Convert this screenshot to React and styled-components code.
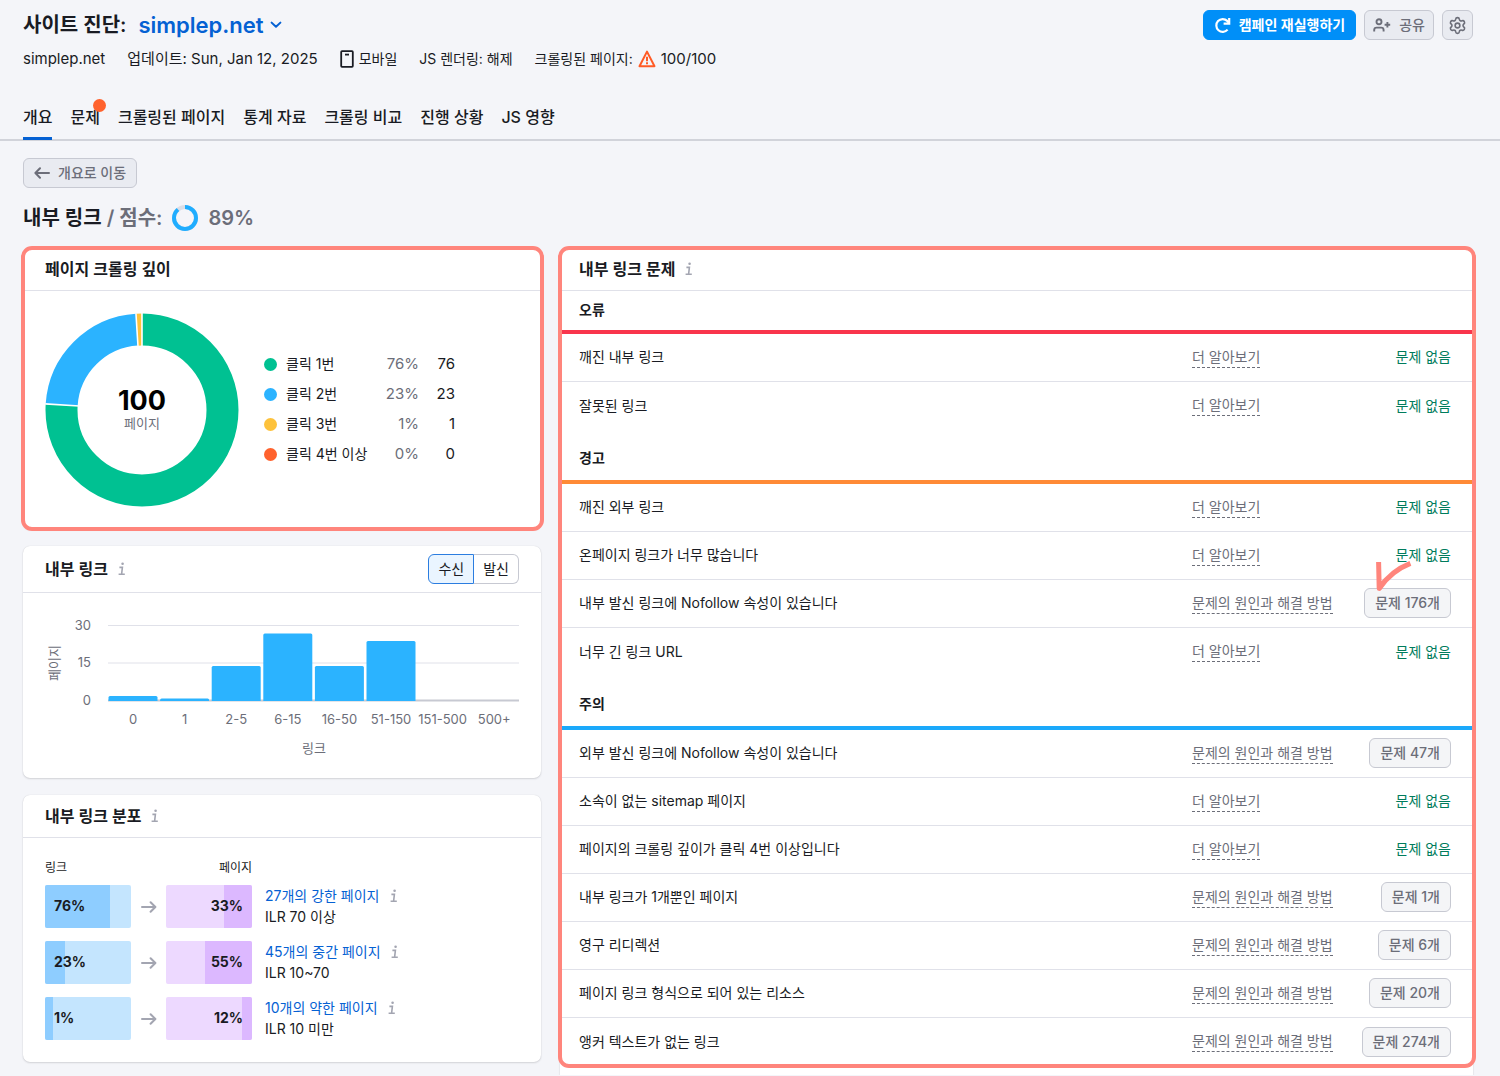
import * as React from 'react';
import styled, {createGlobalStyle} from 'styled-components';
import {Settings} from 'lucide-react';

const GlobalStyle = createGlobalStyle`
  * {
    box-sizing: border-box;
  }

  body {
    margin: 0;
    background: #f4f5f9;
    color: #191b23;
    font-family: Inter, 'Noto Sans CJK KR', sans-serif;
    font-size: 14px;
    line-height: 20px;
  }

  button {
    font: inherit;
    cursor: pointer;
  }

  a {
    color: inherit;
    text-decoration: none;
  }
`;

const Header = styled.header`
  padding: 10px 27px 0 23px;
  border-bottom: 2px solid #d1d3da;
`;

const TitleRow = styled.div`
  display: flex;
  justify-content: space-between;
  align-items: center;
  height: 30px;
`;

const Title = styled.h1`
  display: flex;
  align-items: center;
  gap: 12px;
  margin: 0;
  font-size: 20px;
  font-weight: 600;
`;

const DomainButton = styled.button`
  display: flex;
  align-items: center;
  gap: 6px;
  padding: 0;
  border: 0;
  background: none;
  color: #0561d3;
  font-size: 22px;
  font-weight: 600;
`;

const Actions = styled.div`
  display: flex;
  gap: 8px;
`;

const Button = styled.button`
  display: flex;
  align-items: center;
  gap: ${(props) => props.$gap || 8}px;
  height: 30px;
  padding: 0 ${(props) => (props.$narrow ? 8 : 10)}px;
  border: 1px solid ${(props) => (props.$primary ? '#008ff8' : '#c7c9d2')};
  border-radius: 6px;
  background: ${(props) => (props.$primary ? '#008ff8' : '#e9ebf1')};
  color: ${(props) => (props.$primary ? '#fff' : '#6c6e79')};
  font-weight: ${(props) => (props.$primary ? 600 : 500)};
  white-space: nowrap;
`;

const IconButton = styled(Button)`
  justify-content: center;
  width: 31px;
  padding: 0;
`;

const Meta = styled.div`
  display: flex;
  gap: 22px;
  margin-top: 9px;
  font-size: 15px;
`;

const MetaItem = styled.span`
  display: flex;
  align-items: center;
  gap: 5px;
  font-size: ${(props) => (props.$korean ? 14 : 15)}px;
`;

const Tabs = styled.nav`
  display: flex;
  gap: 18px;
  margin-top: 35px;
  font-size: 16px;
  font-weight: 500;
`;

const Tab = styled.a`
  position: relative;
  height: 36px;
  margin-bottom: -1px;
  padding-top: 3px;
  border-bottom: 3px solid ${(props) => (props.$active ? '#0561d3' : 'transparent')};
`;

const TabDot = styled.i`
  position: absolute;
  top: -5px;
  right: -6px;
  width: 13px;
  height: 13px;
  border-radius: 50%;
  background: #ff622d;
`;

const Content = styled.main`
  padding: 17px 27px 0 23px;
`;

const ScoreHeading = styled.h2`
  display: flex;
  align-items: center;
  gap: 10px;
  height: 30px;
  margin: 15px 0;
  font-size: 20px;
  font-weight: 600;
`;

const ScoreText = styled.span`
  color: #6c6e79;
`;

const Columns = styled.div`
  display: grid;
  grid-template-columns: minmax(0, 518fr) minmax(0, 913fr);
  gap: 19px;
  align-items: start;
`;

const Stack = styled.div`
  display: flex;
  flex-direction: column;
  gap: 17px;
`;

const Card = styled.section`
  position: relative;
  border-radius: 7px;
  background: #fff;
  box-shadow: 0 0 1px 0 rgba(25, 27, 35, 0.16), 0 1px 2px 0 rgba(25, 27, 35, 0.14);
`;

// red marker drawn round the areas worth looking at
const Marker = styled.div`
  position: absolute;
  inset: -2px -3px -2px -2px;
  border: 4px solid #ff857c;
  border-radius: 11px;
  pointer-events: none;
`;

const CardHeader = styled.div`
  display: flex;
  align-items: center;
  gap: 10px;
  height: ${(props) => (props.$tall ? 47 : 43)}px;
  padding: 0 22px 0 ${(props) => props.$left || 22}px;
  border-bottom: 1px solid #e0e1e9;
`;

const CardTitle = styled.h3`
  margin: 0;
  font-size: 16px;
  font-weight: 600;
`;

const DepthBody = styled.div`
  display: flex;
  align-items: center;
  gap: 25px;
  height: 238px;
  padding: 0 22px;
`;

const Donut = styled.div`
  display: grid;
  flex: none;
  width: 194px;
  height: 194px;

  > * {
    grid-area: 1 / 1;
  }
`;

const DonutLabel = styled.div`
  align-self: center;
  padding-bottom: 2px;
  text-align: center;
  color: #6c6e79;
  font-size: 13px;
  line-height: 16px;
`;

const DonutTotal = styled.strong`
  display: block;
  color: #000;
  font-size: 27px;
  line-height: 28px;
`;

const Legend = styled.table`
  border-spacing: 0;

  th,
  td {
    height: 30px;
    padding: 0 0 2px;
    font-weight: 400;
  }

  th {
    min-width: 106px;
    text-align: left;
  }
`;

const LegendName = styled.span`
  display: flex;
  align-items: center;
  gap: 9px;
`;

const Dot = styled.i`
  width: 13px;
  height: 13px;
  border-radius: 50%;
  background: ${(props) => props.$color};
`;

const LegendPercent = styled.td`
  width: 49px;
  color: #6c6e79;
  font-size: 15px;
  text-align: right;
`;

const LegendCount = styled.td`
  width: 36px;
  font-size: 15px;
  text-align: right;
`;

const Toggle = styled.div`
  display: flex;
  margin-left: auto;
`;

const ToggleButton = styled.button`
  height: 30px;
  padding: 0 9px;
  border: 1px solid ${(props) => (props.$active ? '#2b7de0' : '#c7c9d2')};
  border-left-width: ${(props) => (props.$active ? 1 : 0)}px;
  border-radius: ${(props) => (props.$active ? '6px 0 0 6px' : '0 6px 6px 0')};
  background: ${(props) => (props.$active ? '#eaf5ff' : '#fff')};
  color: #191b23;
`;

const ChartBody = styled.div`
  padding: 18px 22px 17px;
`;

const Chart = styled.svg`
  display: block;
  width: 100%;

  text {
    fill: #6c6e79;
    font-size: 13px;
  }
`;

const FlowBody = styled.div`
  display: flex;
  flex-direction: column;
  gap: 13px;
  padding: 20px 22px 22px;
`;

const FlowHead = styled.div`
  display: flex;
  justify-content: space-between;
  width: 207px;
  margin-bottom: -6px;
  font-size: 12px;
`;

const FlowRow = styled.div`
  display: grid;
  grid-template-columns: 86px 15px 86px 1fr;
  gap: 10px;
  align-items: center;
`;

const Meter = styled.div`
  display: flex;
  position: relative;
  justify-content: ${(props) => (props.$pages ? 'flex-end' : 'flex-start')};
  height: 43px;
  border-radius: 2px;
  overflow: hidden;
  background: ${(props) => (props.$pages ? '#edd9ff' : '#c4e5fe')};
`;

const MeterFill = styled.div`
  min-width: 8px;
  background: ${(props) => (props.$pages ? '#dcb8ff' : '#8ecdff')};
`;

const MeterValue = styled.strong`
  position: absolute;
  inset: 0 9px;
  line-height: 42px;
  font-weight: 700;
  text-align: ${(props) => (props.$pages ? 'right' : 'left')};
`;

const FlowText = styled.div`
  padding: 0 0 1px 3px;
  line-height: 21px;
`;

const FlowName = styled.div`
  display: flex;
  align-items: center;
  gap: 10px;
`;

const FlowLink = styled.a`
  color: #0561d3;
`;

const IssuesCard = styled(Card)`
  border-radius: 7px 7px 0 0;
  padding-bottom: 9px;
`;

const Marked = styled.div`
  position: relative;
`;

const IssueTable = styled.table`
  width: 100%;
  table-layout: fixed;
  border-spacing: 0;
`;

const GroupTitle = styled.th`
  height: ${(props) => (props.$first ? 43 : 54)}px;
  padding: ${(props) => (props.$first ? 0 : 8)}px 0 2px 19px;
  border-bottom: 4px solid ${(props) => props.$color};
  font-weight: 600;
  text-align: left;
`;

const IssueRow = styled.tr`
  td {
    height: 48px;
    padding: 0 0 1px;
    border-bottom: 1px solid #e0e1e9;
  }

  &:last-child td {
    border-bottom: 0;
  }

  td:first-child {
    padding-left: 19px;
  }

  td:last-child {
    padding-right: 22px;
    text-align: right;
  }
`;

const NameCol = styled.col``;

const HelpCol = styled.col`
  width: 160px;
`;

const StatusCol = styled.col`
  width: 121px;
`;

const HelpLink = styled.a`
  display: inline-block;
  border-bottom: 1px dashed #6c6e79;
  color: #6c6e79;
`;

const NoIssue = styled.span`
  color: #007c5c;
`;

const CountWrapper = styled.span`
  display: inline-block;
  position: relative;
  vertical-align: middle;
`;

const CountButton = styled(Button)`
  background: #f4f5f7;
`;

const CheckStroke = styled.svg`
  position: absolute;
  top: -28px;
  left: 11px;
`;

const depth = [
  {name: '클릭 1번', percent: 76, color: '#00c192'},
  {name: '클릭 2번', percent: 23, color: '#2bb3ff'},
  {name: '클릭 3번', percent: 1, color: '#fdc23c'},
  {name: '클릭 4번 이상', percent: 0, color: '#ff622d'},
];

const bars = [
  ['0', 2],
  ['1', 1],
  ['2-5', 14],
  ['6-15', 27],
  ['16-50', 14],
  ['51-150', 24],
  ['151-500', 0],
  ['500+', 0],
];

const flows = [
  {links: 76, pages: 33, name: '27개의 강한 페이지', range: 'ILR 70 이상'},
  {links: 23, pages: 55, name: '45개의 중간 페이지', range: 'ILR 10~70'},
  {links: 1, pages: 12, name: '10개의 약한 페이지', range: 'ILR 10 미만'},
];

const groups = [
  {
    title: '오류',
    color: '#f9354c',
    issues: [{name: '깨진 내부 링크'}, {name: '잘못된 링크'}],
  },
  {
    title: '경고',
    color: '#ff8a36',
    issues: [
      {name: '깨진 외부 링크'},
      {name: '온페이지 링크가 너무 많습니다'},
      {name: '내부 발신 링크에 Nofollow 속성이 있습니다', count: 176, checked: true},
      {name: '너무 긴 링크 URL'},
    ],
  },
  {
    title: '주의',
    color: '#1ba9fb',
    issues: [
      {name: '외부 발신 링크에 Nofollow 속성이 있습니다', count: 47},
      {name: '소속이 없는 sitemap 페이지'},
      {name: '페이지의 크롤링 깊이가 클릭 4번 이상입니다'},
      {name: '내부 링크가 1개뿐인 페이지', count: 1},
      {name: '영구 리디렉션', count: 6},
      {name: '페이지 링크 형식으로 되어 있는 리소스', count: 20},
      {name: '앵커 텍스트가 없는 링크', count: 274},
    ],
  },
];

const InfoIcon = () => (
  <svg width="8" height="14" viewBox="0 0 8 14" fill="none" stroke="#a3a5b1" strokeWidth="1.6">
    <circle cx="4.6" cy="1.7" r="1.3" fill="#a3a5b1" stroke="none" />
    <path d="M1.4 5.4H4.4L3.6 12.2M0.6 12.2H6.8" />
  </svg>
);

const ChevronIcon = () => (
  <svg width="12" height="8" viewBox="0 0 12 8" fill="none" stroke="#0561d3" strokeWidth="2">
    <path d="M1.6 1.6L6 5.8L10.4 1.6" strokeLinecap="round" strokeLinejoin="round" />
  </svg>
);

const ReloadIcon = () => (
  <svg width="17" height="17" viewBox="0 0 17 17" fill="none" stroke="#fff" strokeWidth="2.2">
    <path d="M13.6 12.6A6.4 6.4 0 1 1 13.2 3.9L14.6 5.4" />
    <path d="M15.2 1V6.6H9.6" />
  </svg>
);

const ShareIcon = () => (
  <svg width="18" height="14" viewBox="0 0 18 14" fill="none" stroke="#6c6e79" strokeWidth="1.9">
    <circle cx="6" cy="3.8" r="2.5" />
    <path d="M1.2 13.4V12Q1.2 9.6 3.6 9.6H8.2Q10.6 9.6 10.6 12V13.4M14.4 3.9V9.5M11.6 6.7H17.2" />
  </svg>
);

const PhoneIcon = () => (
  <svg width="14" height="18" viewBox="0 0 14 18" fill="none" stroke="#191b23" strokeWidth="1.8">
    <rect x="1.2" y="1.2" width="11.6" height="15.6" rx="0.8" />
    <path d="M5 4.6H9" />
  </svg>
);

const WarningIcon = () => (
  <svg width="18" height="18" viewBox="0 0 18 18" fill="none" stroke="#ff5b26" strokeWidth="2">
    <path d="M9 1.6L16.5 16.2H1.5Z" strokeLinejoin="round" />
    <path d="M9 6.8V11.2M9 12.2V14.2" />
  </svg>
);

const ArrowIcon = ({left}) => (
  <svg width="16" height="12" viewBox="0 0 16 12" fill="none" stroke={left ? '#6c6e79' : '#a3a5b1'} strokeWidth="2">
    <path
      d={left ? 'M6 1.2L1.4 6L6 10.8M1.6 6H15' : 'M9.6 1.2L14.4 6L9.6 10.8M1 6H14.2'}
      strokeLinecap="round"
      strokeLinejoin="round"
    />
  </svg>
);

const ScoreRing = () => (
  <svg width="26" height="26" viewBox="0 0 26 26" fill="none" strokeWidth="4">
    <circle cx="13" cy="13" r="11" stroke="#dcdee6" />
    <circle cx="13" cy="13" r="11" stroke="#1fadff" pathLength="100" strokeDasharray="89 11" transform="rotate(-90 13 13)" />
  </svg>
);

const DonutChart = () => {
  let start = 0;
  const slices = depth.filter((d) => d.percent > 0).map((d) => {
    const slice = {...d, start};
    start += d.percent;
    return slice;
  });

  return (
    <svg width="194" height="194" viewBox="0 0 194 194" fill="none">
      {slices.map((d) => (
        <circle
          key={d.name}
          cx="97"
          cy="97"
          r="80.5"
          stroke={d.color}
          strokeWidth="32"
          pathLength="100"
          strokeDasharray={`${d.percent} ${100 - d.percent}`}
          transform={`rotate(${d.start * 3.6 - 90} 97 97)`}
        />
      ))}
      {slices.map((d) => (
        <path key={d.name} d="M97 0V34" stroke="#fff" strokeWidth="1.6" transform={`rotate(${d.start * 3.6} 97 97)`} />
      ))}
    </svg>
  );
};

const LinksChart = () => (
  <Chart viewBox="0 0 474 150" role="img" aria-label="내부 링크">
    <text x="0" y="0" textAnchor="middle" transform="translate(14 52) rotate(-90)">페이지</text>
    {[30, 15, 0].map((tick) => {
      const y = 89.5 - tick * 2.5;
      return (
        <React.Fragment key={tick}>
          <path d={`M63 ${y}H474`} stroke={tick ? '#e0e1e9' : '#c7c9d2'} strokeWidth={tick ? 1 : 2} />
          <text x="46" y={y + 4} textAnchor="end">{tick}</text>
        </React.Fragment>
      );
    })}
    {bars.map(([label, value], i) => {
      const x = 63.5 + i * 51.6;
      const h = value * 2.5;
      return (
        <React.Fragment key={label}>
          {value > 0 && (
            <path d={`M${x} 90V${91.5 - h}q0 -1.5 1.5 -1.5h46q1.5 0 1.5 1.5V90Z`} fill="#2bb3ff" />
          )}
          <text x={x + 24.5} y="113" textAnchor="middle">{label}</text>
        </React.Fragment>
      );
    })}
    <text x="269" y="142" textAnchor="middle">링크</text>
  </Chart>
);

const Issue = ({issue}) => (
  <IssueRow>
    <td>{issue.name}</td>
    <td>
      <HelpLink href="#help">{issue.count ? '문제의 원인과 해결 방법' : '더 알아보기'}</HelpLink>
    </td>
    <td>
      {issue.count ? (
        <CountWrapper>
          <CountButton>문제 {issue.count}개</CountButton>
          {issue.checked && (
            <CheckStroke width="38" height="34" viewBox="0 0 38 34" fill="none" stroke="#ff857c">
              <path d="M3.6 2L4.2 28.5Q16 11 35.4 3.4" strokeWidth="5" strokeLinejoin="round" />
            </CheckStroke>
          )}
        </CountWrapper>
      ) : (
        <NoIssue>문제 없음</NoIssue>
      )}
    </td>
  </IssueRow>
);

class App extends React.PureComponent {
  state = {direction: '수신'};

  render() {
    const {direction} = this.state;

    return (
      <>
        <GlobalStyle />
        <Header>
          <TitleRow>
            <Title>
              사이트 진단:
              <DomainButton>
                simplep.net
                <ChevronIcon />
              </DomainButton>
            </Title>
            <Actions>
              <Button $primary>
                <ReloadIcon />
                캠페인 재실행하기
              </Button>
              <Button $narrow>
                <ShareIcon />
                공유
              </Button>
              <IconButton aria-label="설정">
                <Settings size={19} />
              </IconButton>
            </Actions>
          </TitleRow>
          <Meta>
            <MetaItem>simplep.net</MetaItem>
            <MetaItem>업데이트: Sun, Jan 12, 2025</MetaItem>
            <MetaItem $korean>
              <PhoneIcon />
              모바일
            </MetaItem>
            <MetaItem $korean>JS 렌더링: 해제</MetaItem>
            <MetaItem>
              <MetaItem $korean>크롤링된 페이지:</MetaItem>
              <WarningIcon />
              100/100
            </MetaItem>
          </Meta>
          <Tabs>
            <Tab href="#overview" $active>개요</Tab>
            <Tab href="#issues">
              문제
              <TabDot />
            </Tab>
            <Tab href="#pages">크롤링된 페이지</Tab>
            <Tab href="#statistics">통계 자료</Tab>
            <Tab href="#compare">크롤링 비교</Tab>
            <Tab href="#progress">진행 상황</Tab>
            <Tab href="#js">JS 영향</Tab>
          </Tabs>
        </Header>

        <Content>
          <Button>
            <ArrowIcon left />
            개요로 이동
          </Button>
          <ScoreHeading>
            <span>
              내부 링크 <ScoreText>/ 점수:</ScoreText>
            </span>
            <ScoreRing />
            <ScoreText>89%</ScoreText>
          </ScoreHeading>

          <Columns>
            <Stack>
              <Card>
                <CardHeader>
                  <CardTitle>페이지 크롤링 깊이</CardTitle>
                </CardHeader>
                <DepthBody>
                  <Donut>
                    <DonutChart />
                    <DonutLabel>
                      <DonutTotal>100</DonutTotal>
                      페이지
                    </DonutLabel>
                  </Donut>
                  <Legend>
                    <tbody>
                      {depth.map((d) => (
                        <tr key={d.name}>
                          <th scope="row">
                            <LegendName>
                              <Dot $color={d.color} />
                              {d.name}
                            </LegendName>
                          </th>
                          <LegendPercent>{d.percent}%</LegendPercent>
                          <LegendCount>{d.percent}</LegendCount>
                        </tr>
                      ))}
                    </tbody>
                  </Legend>
                </DepthBody>
                <Marker />
              </Card>

              <Card>
                <CardHeader $tall>
                  <CardTitle>내부 링크</CardTitle>
                  <InfoIcon />
                  <Toggle>
                    {['수신', '발신'].map((d) => (
                      <ToggleButton
                        key={d}
                        $active={d === direction}
                        aria-pressed={d === direction}
                        onClick={() => this.setState({direction: d})}
                      >
                        {d}
                      </ToggleButton>
                    ))}
                  </Toggle>
                </CardHeader>
                <ChartBody>
                  <LinksChart />
                </ChartBody>
              </Card>

              <Card>
                <CardHeader>
                  <CardTitle>내부 링크 분포</CardTitle>
                  <InfoIcon />
                </CardHeader>
                <FlowBody>
                  <FlowHead>
                    <span>링크</span>
                    <span>페이지</span>
                  </FlowHead>
                  {flows.map((f) => (
                    <FlowRow key={f.name}>
                      <Meter>
                        <MeterFill style={{width: `${f.links}%`}} />
                        <MeterValue>{f.links}%</MeterValue>
                      </Meter>
                      <ArrowIcon />
                      <Meter $pages>
                        <MeterFill $pages style={{width: `${f.pages}%`}} />
                        <MeterValue $pages>{f.pages}%</MeterValue>
                      </Meter>
                      <FlowText>
                        <FlowName>
                          <FlowLink href="#pages">{f.name}</FlowLink>
                          <InfoIcon />
                        </FlowName>
                        <div>{f.range}</div>
                      </FlowText>
                    </FlowRow>
                  ))}
                </FlowBody>
              </Card>
            </Stack>

            <IssuesCard>
              <Marked>
                <CardHeader $left={19}>
                  <CardTitle>내부 링크 문제</CardTitle>
                  <InfoIcon />
                </CardHeader>
                <IssueTable>
                  <colgroup>
                    <NameCol />
                    <HelpCol />
                    <StatusCol />
                  </colgroup>
                  {groups.map((group, i) => (
                    <tbody key={group.title}>
                      <tr>
                        <GroupTitle colSpan="3" scope="rowgroup" $color={group.color} $first={i === 0}>
                          {group.title}
                        </GroupTitle>
                      </tr>
                      {group.issues.map((issue) => (
                        <Issue key={issue.name} issue={issue} />
                      ))}
                    </tbody>
                  ))}
                </IssueTable>
                <Marker />
              </Marked>
            </IssuesCard>
          </Columns>
        </Content>
      </>
    );
  }
}

export default App;
